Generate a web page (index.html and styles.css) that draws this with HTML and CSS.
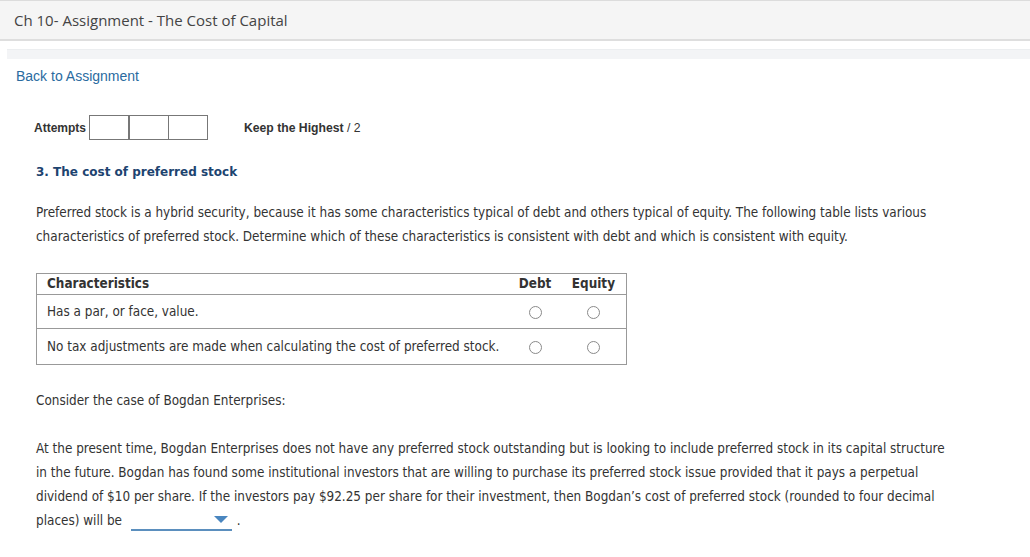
FILE: index.html
```html
<!DOCTYPE html>
<html>
<head>
    <title>Ch 10- Assignment - The Cost of Capital</title>
    <link rel="stylesheet" href="styles.css">
</head>
<body>
    <div class="topbar">
        <h1 class="title">Ch 10- Assignment - The Cost of Capital</h1>
    </div>
    <div class="band"></div>

    <a class="back-link" href="#">Back to Assignment</a>

    <div class="content">
        <div class="attempts">
            <span class="attempts-label">Attempts</span>
            <div class="boxes">
                <span class="box"></span>
                <span class="box"></span>
                <span class="box"></span>
            </div>
            <span class="keep"><b>Keep the Highest</b> / 2</span>
        </div>

        <h2 class="question-title">3. The cost of preferred stock</h2>

        <p class="text intro">Preferred stock is a hybrid security, because it has some characteristics typical of debt and others typical of equity. The following table lists various characteristics of preferred stock. Determine which of these characteristics is consistent with debt and which is consistent with equity.</p>

        <table class="grid">
            <tr>
                <th class="col-text">Characteristics</th>
                <th class="col-opt">Debt</th>
                <th class="col-opt">Equity</th>
            </tr>
            <tr>
                <td class="col-text">Has a par, or face, value.</td>
                <td class="col-opt"><span class="radio"></span></td>
                <td class="col-opt"><span class="radio"></span></td>
            </tr>
            <tr>
                <td class="col-text">No tax adjustments are made when calculating the cost of preferred stock.</td>
                <td class="col-opt"><span class="radio"></span></td>
                <td class="col-opt"><span class="radio"></span></td>
            </tr>
        </table>

        <p class="text consider">Consider the case of Bogdan Enterprises:</p>

        <p class="text case">At the present time, Bogdan Enterprises does not have any preferred stock outstanding but is looking to include preferred stock in its capital structure in the future. Bogdan has found some institutional investors that are willing to purchase its preferred stock issue provided that it pays a perpetual dividend of $10 per share. If the investors pay $92.25 per share for their investment, then Bogdan’s cost of preferred stock (rounded to four decimal places) will be <span class="dropdown"><span class="arrow"></span></span><span class="dot">.</span></p>
    </div>
</body>
</html>
```

FILE: styles.css
```css
body {
    margin: 0;
    padding: 0;
    background-color: #ffffff;
    font-family: "Liberation Sans", Arial, sans-serif;
    color: #333;
}

.topbar {
    height: 38px;
    background-color: #f5f5f5;
    border-top: 1px solid #dcdcdc;
    border-bottom: 2px solid #dedede;
    display: flex;
    align-items: center;
    padding-left: 14px;
}

.title {
    margin: 0;
    font-family: "Open Sans", sans-serif;
    font-size: 15px;
    font-weight: normal;
    color: #444;
}

.band {
    margin: 8px 0 0 7px;
    height: 9px;
    border-top: 1px solid #eceef0;
    background-color: #f3f4f6;
}

.back-link {
    display: block;
    margin: 8px 0 0 16px;
    font-size: 14px;
    color: #2a6b9f;
    text-decoration: none;
    line-height: 18px;
}

.content {
    padding-left: 36px;
}

.attempts {
    display: flex;
    align-items: center;
    margin-top: 30px;
    margin-left: -2px;
    font-size: 12px;
}

.attempts-label {
    font-weight: bold;
    margin-right: 3px;
}

.boxes {
    display: flex;
}

.box {
    width: 38px;
    height: 23px;
    border: 1px solid #777;
    margin-right: -1px;
}

.box:first-child {
    border-width: 1px 2px 1px 1px;
}

.keep {
    margin-left: 37px;
    font-size: 12.2px;
}

.question-title {
    margin: 25px 0 0 0;
    font-family: "DejaVu Sans", Verdana, sans-serif;
    font-size: 12px;
    font-weight: bold;
    color: #1d4470;
}

.text {
    margin: 24px 0 0 0;
    max-width: 915px;
    font-family: "DejaVu Sans Condensed", "DejaVu Sans", sans-serif;
    font-size: 13.4px;
    line-height: 24px;
    color: #333;
}

.intro {
    margin-top: 22px;
}

.grid {
    margin-top: 24px;
    width: 591px;
    border-collapse: collapse;
    border: 1px solid #999;
    font-family: "DejaVu Sans Condensed", "DejaVu Sans", sans-serif;
    font-size: 13.4px;
    color: #333;
}

.grid th {
    height: 20px;
    font-weight: bold;
    border-bottom: 1px solid #999;
    padding: 0 10px;
    line-height: 18px;
}

.grid td {
    height: 33px;
    border-top: 1px solid #999;
    padding: 0 10px;
}

.grid tr:last-child td {
    height: 35px;
}

.col-text {
    text-align: left;
    white-space: nowrap;
}

.col-opt {
    text-align: center;
    width: 37px;
}

.grid th.col-opt {
    padding: 0 11px 0 6px;
}

.grid td.col-opt {
    padding: 0 13px 0 8px;
}

.radio {
    display: inline-block;
    width: 11px;
    height: 11px;
    border: 1px solid #8a8a8a;
    border-radius: 50%;
    vertical-align: middle;
}

.consider {
    margin-top: 24px;
}

.case {
    margin-top: 24px;
}

.dropdown {
    display: inline-block;
    position: relative;
    width: 101px;
    height: 18px;
    margin-left: 5px;
    border-bottom: 2px solid #5b8fbe;
    vertical-align: -6px;
}

.arrow {
    position: absolute;
    right: 4px;
    top: 5px;
    width: 0;
    height: 0;
    border-left: 7px solid transparent;
    border-right: 7px solid transparent;
    border-top: 7px solid #4a86bf;
}

.dot {
    margin-left: 5px;
}
```
